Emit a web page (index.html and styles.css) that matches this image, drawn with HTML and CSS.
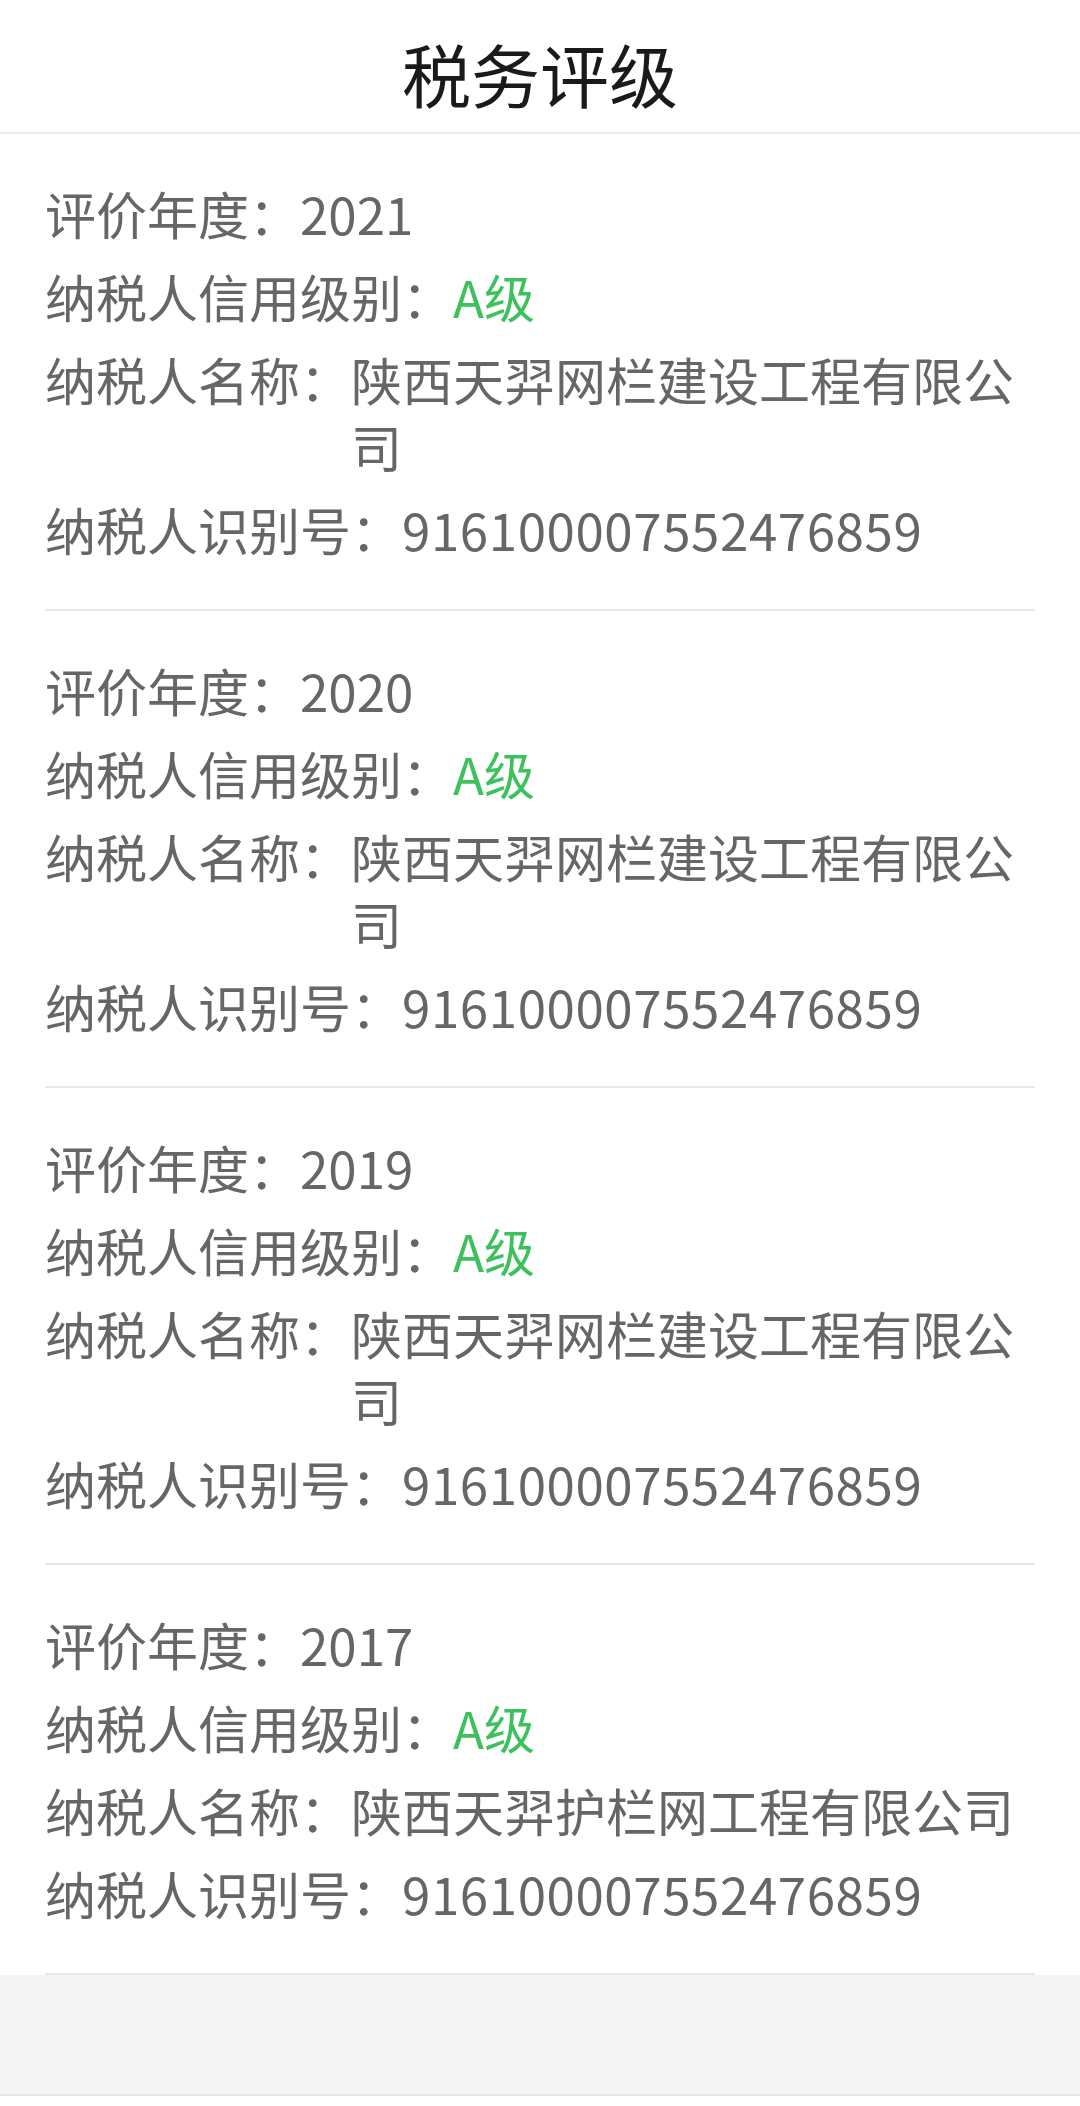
FILE: index.html
```html
<!DOCTYPE html>
<html lang="zh-CN">
<head>
  <meta charset="UTF-8" />
  <meta name="viewport" content="width=device-width, initial-scale=1.0"/>
  <title>税务评级</title>
  <link rel="stylesheet" href="styles.css">
</head>
<body>
  <header class="page-header">
    <h1>税务评级</h1>
  </header>

  <main class="rating-list">
    <section class="rating-item">
      <div class="row"><span class="label">评价年度：</span><span class="value">2021</span></div>
      <div class="row"><span class="label">纳税人信用级别：</span><span class="value grade">A级</span></div>
      <div class="row"><span class="label">纳税人名称：</span><span class="value">陕西天羿网栏建设工程有限公司</span></div>
      <div class="row"><span class="label">纳税人识别号：</span><span class="value tax-id">916100007552476859</span></div>
    </section>

    <section class="rating-item">
      <div class="row"><span class="label">评价年度：</span><span class="value">2020</span></div>
      <div class="row"><span class="label">纳税人信用级别：</span><span class="value grade">A级</span></div>
      <div class="row"><span class="label">纳税人名称：</span><span class="value">陕西天羿网栏建设工程有限公司</span></div>
      <div class="row"><span class="label">纳税人识别号：</span><span class="value tax-id">916100007552476859</span></div>
    </section>

    <section class="rating-item">
      <div class="row"><span class="label">评价年度：</span><span class="value">2019</span></div>
      <div class="row"><span class="label">纳税人信用级别：</span><span class="value grade">A级</span></div>
      <div class="row"><span class="label">纳税人名称：</span><span class="value">陕西天羿网栏建设工程有限公司</span></div>
      <div class="row"><span class="label">纳税人识别号：</span><span class="value tax-id">916100007552476859</span></div>
    </section>

    <section class="rating-item">
      <div class="row"><span class="label">评价年度：</span><span class="value">2017</span></div>
      <div class="row"><span class="label">纳税人信用级别：</span><span class="value grade">A级</span></div>
      <div class="row"><span class="label">纳税人名称：</span><span class="value">陕西天羿护栏网工程有限公司</span></div>
      <div class="row"><span class="label">纳税人识别号：</span><span class="value tax-id">916100007552476859</span></div>
    </section>
  </main>

  <footer class="page-footer"></footer>
</body>
</html>
```

FILE: styles.css
```css
/* Global */
body {
  margin: 0;
  padding: 0;
  background: #fff;
  font-family: "Noto Sans CJK SC", "Noto Sans", sans-serif;
  color: #666;
}

/* Header */
.page-header {
  height: 114px;
  padding-top: 18px;
  border-bottom: 2px solid #ececec;
  text-align: center;
}

.page-header h1 {
  margin: 0;
  font-size: 69px;
  line-height: 110px;
  font-weight: 400;
  color: #1a1a1a;
}

/* List */
.rating-list {
  margin: 0 45px;
}

.rating-item {
  display: flex;
  flex-direction: column;
  gap: 16px;
  padding: 46px 0 46px;
  border-bottom: 2px solid #e8e8e8;
}

.row {
  display: flex;
  font-size: 51px;
  line-height: 67px;
}

.label {
  flex-shrink: 0;
}

.value {
  flex: 1;
}

.tax-id {
  letter-spacing: 0.6px;
}

.grade {
  color: #3cc15c;
}

/* Footer */
.page-footer {
  height: 119px;
  background: #f5f5f5;
  border-bottom: 2px solid #e6e6e6;
}
```
